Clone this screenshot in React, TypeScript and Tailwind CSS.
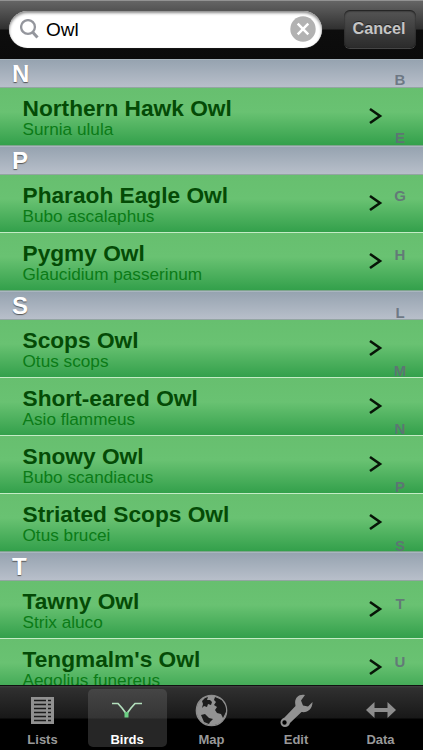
type Bird = { name: string; latin: string };
type Section = { letter: string; birds: Bird[] };

const sections: Section[] = [
  { letter: "N", birds: [{ name: "Northern Hawk Owl", latin: "Surnia ulula" }] },
  {
    letter: "P",
    birds: [
      { name: "Pharaoh Eagle Owl", latin: "Bubo ascalaphus" },
      { name: "Pygmy Owl", latin: "Glaucidium passerinum" },
    ],
  },
  {
    letter: "S",
    birds: [
      { name: "Scops Owl", latin: "Otus scops" },
      { name: "Short-eared Owl", latin: "Asio flammeus" },
      { name: "Snowy Owl", latin: "Bubo scandiacus" },
      { name: "Striated Scops Owl", latin: "Otus brucei" },
    ],
  },
  {
    letter: "T",
    birds: [
      { name: "Tawny Owl", latin: "Strix aluco" },
      { name: "Tengmalm's Owl", latin: "Aegolius funereus" },
    ],
  },
];

const indexLetters = ["B", "E", "G", "H", "L", "M", "N", "P", "S", "T", "U"];

function SearchBar() {
  return (
    <header className="flex h-[59px] shrink-0 items-start border-t border-[#929292] bg-[linear-gradient(#656565_0px,#303030_28px,#0d0d0d_29px,#0b0b0b_57px)] pl-[9px]">
      <div className="mt-[10px] flex h-[37px] w-[313px] items-center rounded-full bg-white pr-[6px] pl-[11px] shadow-[inset_0_2px_3px_#888,0_0_1px_#777]">
        <svg className="-mt-[2px]" width="19" height="20" viewBox="0 0 19 20" fill="none" stroke="#94969d">
          <circle cx="8" cy="8" r="6.9" strokeWidth="2.3" />
          <path d="M12.5 13 17.5 18.5" strokeWidth="3" />
        </svg>
        <input
          className="ml-[7px] min-w-0 flex-1 bg-transparent pt-[1px] text-[19px] text-black outline-none"
          defaultValue="Owl"
          aria-label="Search"
        />
        <button className="-mt-[2px]" aria-label="Clear">
          <svg width="26" height="26" viewBox="0 0 26 26">
            <circle cx="13" cy="13" r="12.7" fill="#b2b2b2" />
            <path d="M7.7 7.7 18.3 18.3M18.3 7.7 7.7 18.3" stroke="#fff" strokeWidth="2.5" />
          </svg>
        </button>
      </div>
      <button className="mt-[9px] ml-[22px] h-[38px] w-[72px] rounded-[6px] bg-linear-to-b from-[#555] to-[#2b2b2b] pr-[2px] pb-[1px] text-[16.2px] font-bold text-[#c5c5c5] shadow-[inset_0_1px_2px_#151515,0_1px_0_#454545] [text-shadow:0_-1px_0_#222]">
        Cancel
      </button>
    </header>
  );
}

function BirdRow({ name, latin, last }: Bird & { last: boolean }) {
  return (
    <li
      className={`flex h-[58px] items-start justify-between border-b bg-[linear-gradient(#67bf6f_0%,#69c272_42%,#33a04b_100%)] pr-[40px] pl-[22.5px] ${
        last ? "border-[#7fa58e]" : "border-[#c4ebc5]"
      }`}
    >
      <div className="pt-[7px]">
        <div className="text-[22.7px] leading-[26px] font-bold whitespace-nowrap text-[#044b06]">{name}</div>
        <div className="-mt-[2px] text-[17.2px] leading-[20px] whitespace-nowrap text-[#0b7b17]">{latin}</div>
      </div>
      <svg className="mt-[19px]" width="14" height="18" viewBox="0 0 14 18" fill="none">
        <path d="M1 2 11 9 1 16" stroke="#071507" strokeWidth="2.6" />
      </svg>
    </li>
  );
}

function ListsIcon() {
  return (
    <svg width="23" height="27" viewBox="0 0 23 27">
      <path d="M0 0H23V27H0Z" fill="#919191" />
      <path
        d="M3 3.5H15M3 7.5H15M3 11.5H15M3 15.5H15M3 19.5H15M3 23.5H15M17 3.5H20M17 7.5H20M17 11.5H20M17 15.5H20M17 19.5H20M17 23.5H20"
        stroke="#1c1c1c"
        strokeWidth="1.3"
      />
    </svg>
  );
}

function BirdsIcon() {
  return (
    <svg width="30" height="18" viewBox="0 0 30 18" fill="none">
      <path d="M0 2.5H6L10 7 14.5 13 19 7 23 2.5H30" stroke="#b3dfbd" strokeWidth="1.7" />
      <path d="M12.5 11H16.5V16.5H12.5Z" fill="#6ccf84" />
    </svg>
  );
}

function MapIcon() {
  return (
    <svg width="33" height="33" viewBox="0 0 33 33">
      <circle cx="16.5" cy="16.5" r="15" fill="#929292" />
      <path
        d="M7 7 10 4 13 3 12 6 15 6 17 8 16 11 13 10 12 13 9 12 7 14 8 10ZM20 3 27 6 31 12 31 18 28 24 26 20 22 19 20 16 22 13 19 11 21 8 19 6ZM6 21 10 20 14 24 18 25 15 28 14 30 9 28Z"
        fill="#1b1b1b"
      />
      <circle cx="16.5" cy="16.5" r="15.2" fill="none" stroke="#8c8c8c" strokeWidth="1.3" />
    </svg>
  );
}

function EditIcon() {
  return (
    <svg width="33" height="33" viewBox="0 0 33 33">
      <path
        fillRule="evenodd"
        d="M25 1C19 -.5 14.5 4 15.2 9.5L15.5 12 4.5 23.5C1.5 24.5 .5 26.5 .5 28.5 .5 31 2.5 33 5 33 7.5 33 9.3 31.5 10 29L21.5 18C27.5 19 32.5 15 32.5 8L28 12.5 23 11.5 21 6.5ZM4.5 26.3A2.2 2.2 0 1 1 4.5 30.7 2.2 2.2 0 0 1 4.5 26.3Z"
        fill="#929292"
      />
    </svg>
  );
}

function DataIcon() {
  return (
    <svg width="30" height="16" viewBox="0 0 30 16">
      <path d="M0 8 8.5 0V6H21.5V0L30 8 21.5 16V10H8.5V16Z" fill="#8d8d8d" />
    </svg>
  );
}

const tabs = [
  { label: "Lists", icon: <ListsIcon /> },
  { label: "Birds", icon: <BirdsIcon />, active: true },
  { label: "Map", icon: <MapIcon /> },
  { label: "Edit", icon: <EditIcon /> },
  { label: "Data", icon: <DataIcon /> },
];

function TabBar() {
  return (
    <nav className="flex h-[65px] shrink-0 justify-center gap-[5.5px] border-t border-[#111] bg-[linear-gradient(#414141_0px,#303030_2px,#181818_32px,#000_33px)] pt-[3px]">
      {tabs.map((tab) => (
        <button
          key={tab.label}
          className={`flex h-[58px] w-[79px] shrink-0 flex-col items-center rounded-[5px] text-[13px] font-bold ${
            tab.active ? "bg-[linear-gradient(#454545_0px,#353535_29px,#262626_30px)] text-white" : "text-[#999]"
          }`}
        >
          <span className="flex h-[42px] items-center">{tab.icon}</span>
          <span className="mt-[2px] leading-[14px]">{tab.label}</span>
        </button>
      ))}
    </nav>
  );
}

export default function App() {
  return (
    <div className="flex h-[750px] w-[423px] flex-col overflow-hidden bg-black font-['Liberation_Sans',Arial,sans-serif]">
      <SearchBar />
      <main className="relative min-h-0 flex-1 overflow-hidden">
        {sections.map((section) => (
          <section key={section.letter}>
            <h2 className="h-[29px] border-t border-b border-t-[#a9b6bf] border-b-[#93a5a2] bg-linear-to-b from-[#96a3b0] to-[#b8bfca] pl-[12px] text-[24px] leading-[28px] font-bold text-white [text-shadow:0_1px_1px_#555]">
              {section.letter}
            </h2>
            <ul>
              {section.birds.map((bird, i) => (
                <BirdRow key={bird.name} {...bird} last={i === section.birds.length - 1} />
              ))}
            </ul>
          </section>
        ))}
        <div className="absolute top-[-8px] right-[13px] flex w-[20px] flex-col text-center text-[15px] font-bold text-[#626d79]/85">
          {indexLetters.map((letter) => (
            <span key={letter} className="h-[58.2px] leading-[58px]">
              {letter}
            </span>
          ))}
        </div>
      </main>
      <TabBar />
    </div>
  );
}
